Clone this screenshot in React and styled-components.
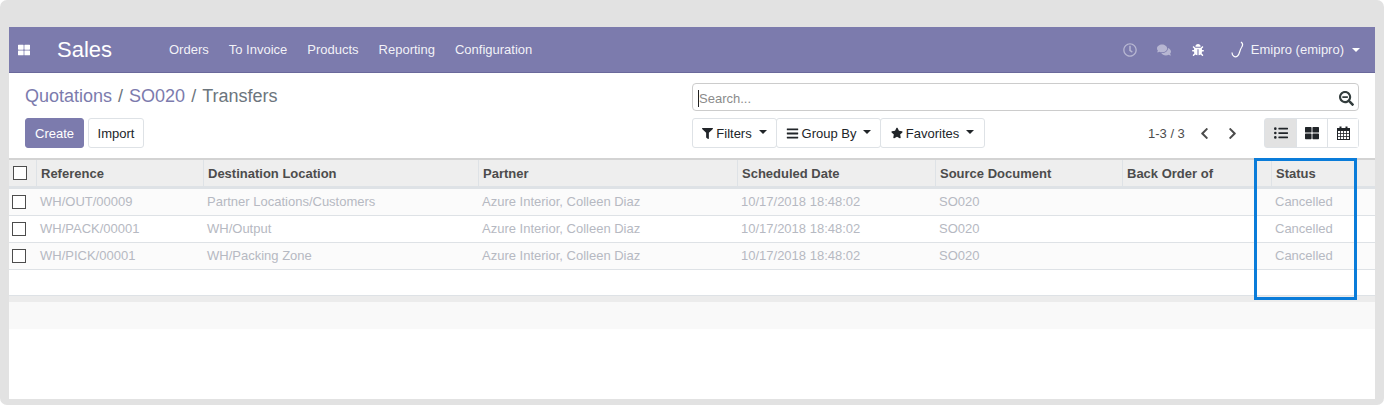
import React from "react";
import styled, { createGlobalStyle } from "styled-components";
import {
  FaThLarge, FaRegClock, FaComments, FaBug, FaSearchMinus, FaFilter, FaBars, FaStar,
  FaChevronLeft, FaChevronRight, FaListUl,
} from "react-icons/fa";

const Global = createGlobalStyle`
  html, body { margin: 0; padding: 0; background: #fff; }
  * { box-sizing: border-box; }
  body { font-family: "Liberation Sans", Arial, sans-serif; font-size: 13px; color: #4c4c4c; }
`;

const Frame = styled.div`
  width: 1384px; height: 405px; background: #e2e2e2; border-radius: 7px;
  padding: 27px 9px 6px; overflow: hidden;
`;
const Page = styled.div`
  height: 372px; background: #fff; display: flex; flex-direction: column;
`;
const Nav = styled.header`
  height: 46px; flex: none; background: #7c7bad; border-bottom: 1px solid #6a699b;
  display: flex; align-items: center; color: #fff;
`;
const Apps = styled.span`
  width: 48px; padding-left: 9px; display: flex; align-items: center; font-size: 12px; color: #fff;
`;
const Brand = styled.span`
  width: 102px; font-size: 22px; line-height: 1; color: #fff;
`;
const Menu = styled.nav`display: flex; flex: 1;`;
const MenuItem = styled.span`
  padding: 0 10px; color: rgba(255,255,255,.92); font-size: 13px;
`;
const Systray = styled.div`display: flex; align-items: center; padding-right: 15px;`;
const TrayIcon = styled.span`
  display: flex; align-items: center; justify-content: center; width: ${p => p.$w}px;
  font-size: 14px; color: ${p => p.$dim ? "rgba(255,255,255,.45)" : "#fff"};
`;
const User = styled.span`
  display: flex; align-items: center; margin-left: 14px; color: rgba(255,255,255,.92); font-size: 13px;
  svg { margin-right: 6px; }
`;
const Caret = styled.i`
  display: inline-block; width: 0; height: 0; margin-left: ${p => p.$ml ?? 7}px;
  border-left: 4px solid transparent; border-right: 4px solid transparent;
  border-top: 4px solid ${p => p.$c || "#333"}; vertical-align: middle;
  position: relative; top: ${p => p.$top ?? -1}px;
`;

const Panel = styled.section`
  height: 85px; flex: none; padding: 10px 16px 0; display: grid; grid-template-columns: 1fr 1fr;
  grid-template-rows: 28px 30px; row-gap: 7px;
`;
const Crumbs = styled.div`
  font-size: 18px; line-height: 26px; color: #6c757d; display: flex; gap: 6px;
  a { color: #7c7bad; }
`;
const Search = styled.div`
  border: 1px solid #ccc; border-radius: 4px; display: flex; align-items: center;
  padding: 2px 5px 0; height: 28px; color: #8b8b8b; font-size: 13px;
  justify-content: space-between;
`;
const Placeholder = styled.span`border-left: 1px solid #222; line-height: 17px;`;
const SearchBtn = styled.span`display: flex; font-size: 15px; color: #333d3d; margin-right: -1px;`;
const Buttons = styled.div`display: flex; gap: 4px; align-items: stretch;`;
const Button = styled.button`
  font: inherit; font-size: 13px; height: 30px; padding: 0 ${p => p.$px ?? 9}px; border-radius: 3px;
  border: 1px solid ${p => p.$primary ? "#7c7bad" : "#dee2e6"};
  background: ${p => p.$primary ? "#7c7bad" : "#fff"};
  color: ${p => p.$primary ? "#fff" : "#212529"};
  display: flex; align-items: center;
`;
const SecondRow = styled.div`display: flex; justify-content: space-between; align-items: center;`;
const Filters = styled.div`display: flex;`;
const FilterBtn = styled(Button)`
  width: ${p => p.$w}px; justify-content: center; padding: 0; border-radius: 3px; margin-right: -1px;
  svg { margin-right: 3px; font-size: 13px; color: #212529; }
`;
const RightTools = styled.div`display: flex; align-items: center;`;
const Pager = styled.span`color: #4c4c4c; width: 116px; display: flex; align-items: center;`;
const PagerCount = styled.span`width: 50px;`;
const Chevron = styled.span`display: flex; width: 28px; font-size: 13px; color: #4c4c4c;`;
const Views = styled.div`display: flex; border: 1px solid #dee2e6; border-radius: 3px; height: 30px;`;
const ViewBtn = styled.span`
  width: 31px; display: flex; align-items: center; justify-content: center; font-size: 14px; color: #212529;
  background: ${p => p.$active ? "#e2e2e2" : "#fff"};
  border-left: ${p => p.$first ? "none" : "1px solid #dee2e6"};
`;

const TableArea = styled.div`position: relative; flex: none; border-top: 2px solid #d3d3d3;`;
const Table = styled.table`
  width: 1366px; table-layout: fixed; border-collapse: separate; border-spacing: 0;
`;
const Th = styled.th`
  height: 29px; padding: 0 4px; background: #eee; text-align: left; font-size: 13px; font-weight: bold;
  color: #4c4c4c; border-left: ${p => p.$noBorder ? "none" : "1px solid #dee2e6"};
  border-bottom: 3px solid #dee2e6;
`;
const Tr = styled.tr`
  background: ${p => p.$odd ? "#fbfbfb" : "#fff"};
`;
const Td = styled.td`
  height: 27px; padding: 0 3px 1px 4px; color: #b6b9c2; font-size: 13px; border-bottom: 1px solid #dee2e6;
  white-space: nowrap;
`;
const Box = styled.span`
  display: block; width: 14px; height: 14px; border: 1px solid #4c4c4c; background: #fff;
  margin-left: ${p => p.$ml}px;
`;
const BlankTd = styled.td`height: 26px; border-bottom: 1px solid #dee2e6; padding: 0;`;
const Highlight = styled.div`
  position: absolute; left: 1245px; top: -2px; width: 103px; height: 142px;
  border: 3px solid #0a7cd9; pointer-events: none;
`;
const Gap = styled.div`height: 6px; flex: none; background: #ececec;`;
const Footer = styled.div`height: 27px; flex: none; background: #f9f9f9;`;

const rows = [
  ["WH/OUT/00009", "Partner Locations/Customers"],
  ["WH/PACK/00001", "WH/Output"],
  ["WH/PICK/00001", "WH/Packing Zone"],
];
const columns = [
  ["Reference", 167], ["Destination Location", 275], ["Partner", 259], ["Scheduled Date", 198],
  ["Source Document", 187], ["Back Order of", 149], ["Status", 104],
];

const CalendarIcon = () => (
  <svg width="13" height="14" viewBox="0 0 13 14" fill="none">
    <rect x="0.5" y="2.5" width="12" height="11" stroke="#212529" />
    <rect x="0" y="2" width="13" height="3" fill="#212529" />
    <rect x="2.5" y="0.5" width="2" height="3" fill="#212529" />
    <rect x="8.5" y="0.5" width="2" height="3" fill="#212529" />
    <path d="M3.500 5v8M6.500 5v8M9.500 5v8M1 7.500h11M1 10.500h11" stroke="#212529" strokeWidth="0.8" />
  </svg>
);

export default function App() {
  return (
    <Frame>
      <Global />
      <Page>
        <Nav>
          <Apps><FaThLarge /></Apps>
          <Brand>Sales</Brand>
          <Menu>
            {["Orders", "To Invoice", "Products", "Reporting", "Configuration"].map(m => <MenuItem key={m}>{m}</MenuItem>)}
          </Menu>
          <Systray>
            <TrayIcon $dim $w={34}><FaRegClock /></TrayIcon>
            <TrayIcon $dim $w={34}><FaComments /></TrayIcon>
            <TrayIcon $w={34}><FaBug size={12} /></TrayIcon>
            <User>
              <svg width="16" height="18" viewBox="0 0 16 18" fill="none" stroke="#fff" strokeWidth="1.2">
                <path d="M3 11.500C3 15 6 17 8.500 15C11 13 10.500 9 12.500 6.500C14 4.500 14 2.500 12 1" />
              </svg>
              Emipro (emipro)<Caret $c="#fff" $ml={8} $top={0} />
            </User>
          </Systray>
        </Nav>
        <Panel>
          <Crumbs><a>Quotations</a><span>/</span><a>SO020</a><span>/</span><span>Transfers</span></Crumbs>
          <Search>
            <Placeholder>Search...</Placeholder>
            <SearchBtn><FaSearchMinus /></SearchBtn>
          </Search>
          <Buttons>
            <Button $primary>Create</Button>
            <Button $px={8.5}>Import</Button>
          </Buttons>
          <SecondRow>
            <Filters>
              <FilterBtn $w={85}><FaFilter size={11} />Filters<Caret $c="#212529" /></FilterBtn>
              <FilterBtn $w={105}><FaBars size={13} />Group By<Caret $c="#212529" /></FilterBtn>
              <FilterBtn $w={105}><FaStar size={12} />Favorites<Caret $c="#212529" /></FilterBtn>
            </Filters>
            <RightTools>
              <Pager>
                <PagerCount>1-3 / 3</PagerCount>
                <Chevron><FaChevronLeft /></Chevron>
                <Chevron><FaChevronRight /></Chevron>
              </Pager>
              <Views>
                <ViewBtn $active $first><FaListUl /></ViewBtn>
                <ViewBtn><FaThLarge /></ViewBtn>
                <ViewBtn><CalendarIcon /></ViewBtn>
              </Views>
            </RightTools>
          </SecondRow>
        </Panel>
        <TableArea>
          <Table>
            <colgroup>
              <col style={{ width: 27 }} />
              {columns.map(([n, w]) => <col key={n} style={{ width: w }} />)}
            </colgroup>
            <thead>
              <tr>
                <Th $noBorder><Box $ml={0} /></Th>
                {columns.map(([n]) => <Th key={n}>{n}</Th>)}
              </tr>
            </thead>
            <tbody>
              {rows.map((r, i) => (
                <Tr key={r[0]} $odd={i % 2 === 0}>
                  <Td><Box $ml={-1} /></Td>
                  <Td>{r[0]}</Td>
                  <Td>{r[1]}</Td>
                  <Td>Azure Interior, Colleen Diaz</Td>
                  <Td>10/17/2018 18:48:02</Td>
                  <Td>SO020</Td>
                  <Td />
                  <Td>Cancelled</Td>
                </Tr>
              ))}
              <tr><BlankTd colSpan={8} /></tr>
            </tbody>
          </Table>
          <Highlight />
        </TableArea>
        <Gap />
        <Footer />
      </Page>
    </Frame>
  );
}
